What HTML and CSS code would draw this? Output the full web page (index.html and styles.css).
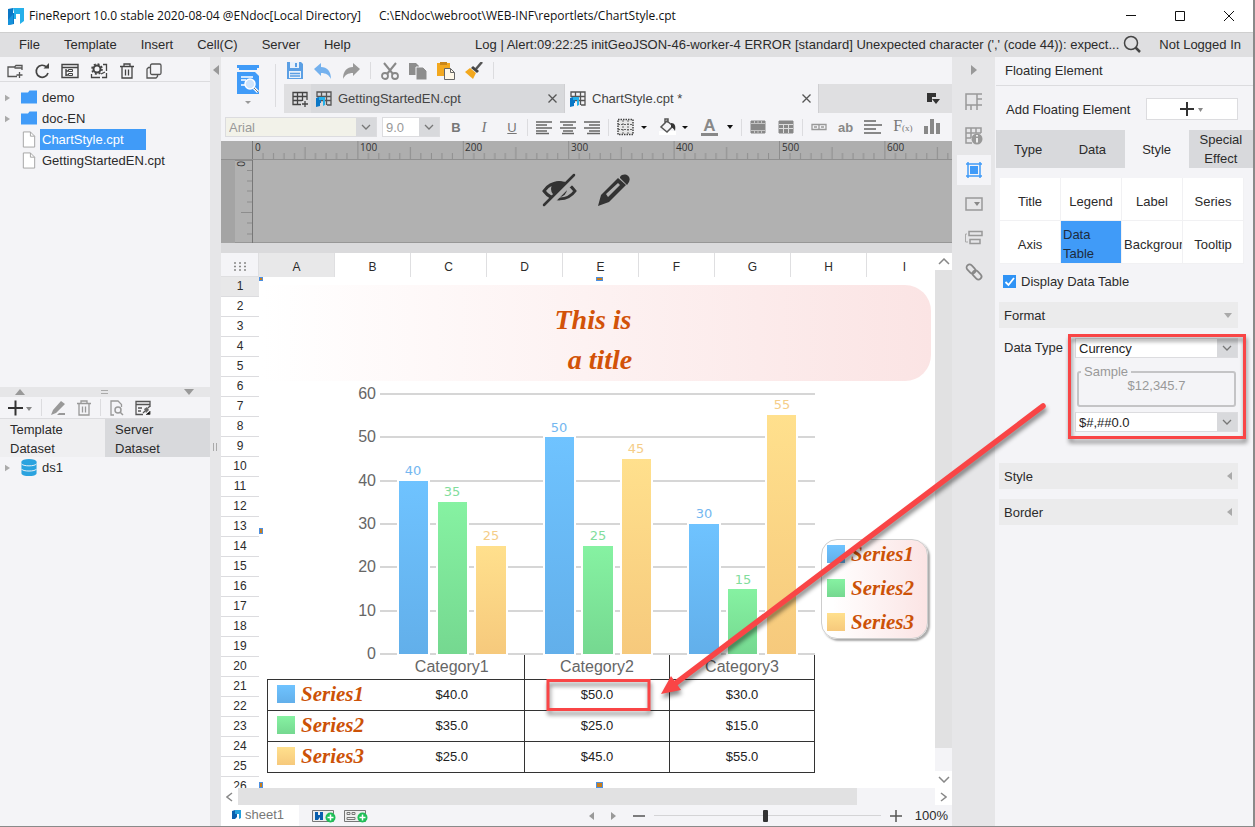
FILE: index.html
```html
<!DOCTYPE html>
<html lang="en">
<head>
<meta charset="utf-8">
<title>FineReport 10.0</title>
<link rel="stylesheet" href="styles.css">
</head>
<body>
<svg class="defs" aria-hidden="true">
  <defs>
    <linearGradient id="g-blue" x1="0" y1="0" x2="0" y2="1"><stop offset="0" stop-color="#6fc3ff"/><stop offset="1" stop-color="#62afea"/></linearGradient>
    <linearGradient id="g-green" x1="0" y1="0" x2="0" y2="1"><stop offset="0" stop-color="#86f2a2"/><stop offset="1" stop-color="#75d890"/></linearGradient>
    <linearGradient id="g-gold" x1="0" y1="0" x2="0" y2="1"><stop offset="0" stop-color="#ffe08d"/><stop offset="1" stop-color="#f6c97c"/></linearGradient>
    <symbol id="folder" viewBox="0 0 16 14"><path fill="#409bf8" d="M0 2h7l1.500-2H16v13H0z"/></symbol>
    <symbol id="file" viewBox="0 0 14 18"><path fill="#fff" stroke="#a3a3a3" d="M1 1h7.500L13 5.500V17H1z"/><path fill="none" stroke="#a3a3a3" d="M8.500 1v4.500H13"/></symbol>
    <symbol id="chev" viewBox="0 0 10 6"><path fill="none" stroke="#777" stroke-width="1.300" d="M1 1l4 4 4-4"/></symbol>
    <symbol id="caret" viewBox="0 0 6 4"><path fill="currentColor" d="M0 0h6L3 4z"/></symbol>
    <symbol id="trash" viewBox="0 0 16 16"><path fill="none" stroke="currentColor" stroke-width="1.300" d="M1 3.500h14M5 3V1h6v2M3 4v11h10V4M6.500 6.500v6M9.500 6.500v6"/></symbol>
    <symbol id="logo" viewBox="0 0 18 18"><path fill="#0a77c6" d="M1 2l5-1v5h3v6H7v5l-6 1z"/><path fill="#25b0ea" d="M6 1h11v13l-4 3V7H9v5H7V5z"/><path fill="#1592db" d="M1 13l5-6v10l-5 1z"/></symbol>
    <symbol id="tabgrid" viewBox="0 0 16 16"><path fill="none" stroke="#555" stroke-width="1.300" d="M1 6V1h14v13h-4M1 5.500h14M1 9.500h14M5.500 1v6M10.500 1v13"/><path fill="#0a77c6" d="M0 7l3-1v3h2v3H4v3l-4 1z"/><path fill="#25b0ea" d="M3 6h6v8l-2 1V9H3z"/></symbol>
    <symbol id="lines" viewBox="0 0 18 16"><path stroke="#888" stroke-width="2" d="M0 2h12M0 6h18M0 10h12M0 14h17"/></symbol>
  </defs>
</svg>

<div class="app">
  <header class="titlebar">
    <svg class="i18" aria-hidden="true"><use href="#logo"/></svg>
    <span class="app-name">FineReport 10.0 stable 2020-08-04 @ENdoc[Local Directory]</span>
    <span class="app-path">C:\ENdoc\webroot\WEB-INF\reportlets/ChartStyle.cpt</span>
    <div class="window-buttons">
      <button type="button" aria-label="Minimize"><svg width="12" height="12"><path stroke="#111" d="M1 5.500h10"/></svg></button>
      <button type="button" aria-label="Maximize"><svg width="12" height="12"><path fill="none" stroke="#111" d="M1.500 1.500h9v9h-9z"/></svg></button>
      <button type="button" aria-label="Close"><svg width="12" height="12"><path stroke="#111" d="M1 1l10 10M11 1L1 11"/></svg></button>
    </div>
  </header>

  <nav class="menubar">
    <button type="button">File</button><button type="button">Template</button><button type="button">Insert</button><button type="button">Cell(C)</button><button type="button">Server</button><button type="button">Help</button>
    <span class="log">Log | Alert:09:22:25 initGeoJSON-46-worker-4 ERROR [standard] Unexpected character (',' (code 44)): expect...</span>
    <button type="button" class="search" aria-label="Search"><svg width="18" height="18"><circle cx="8" cy="8" r="6.500" fill="none" stroke="#444" stroke-width="1.500"/><path stroke="#444" stroke-width="2.500" d="M12.500 12.500L17 17"/></svg></button>
    <button type="button" class="login">Not Logged In</button>
  </nav>

  <div class="main">
    <aside class="left">
      <section class="templates">
        <div class="toolbar file-tools">
          <button type="button" aria-label="New folder"><svg class="i16" viewBox="0 0 16 16"><path fill="none" stroke="#555" stroke-width="1.300" d="M15 7V2.500H9L7.500 4H1v9.500h9M7.500 5H15M12.500 9v6M9.500 12h6"/></svg></button>
          <button type="button" aria-label="Refresh"><svg class="i16" viewBox="0 0 16 16"><path fill="none" stroke="#444" stroke-width="1.700" d="M12.500 4A6 6 0 1 0 14 10"/><path fill="#444" d="M9.500 5.500H15V0z"/></svg></button>
          <button type="button" aria-label="Show structure"><svg class="i18" viewBox="0 0 18 16"><path fill="none" stroke="#444" stroke-width="1.400" d="M1 1.500h16v13H1zM1 4.500h16M5 6v7M5 8h2M5 12h2"/><path fill="none" stroke="#444" d="M7.500 6.500h4v2h-4zM7.500 10.500h4v2h-4z"/></svg></button>
          <button type="button" aria-label="Settings"><svg class="i18" viewBox="0 0 18 16"><circle cx="7" cy="6" r="3.500" fill="none" stroke="#444" stroke-width="2"/><circle cx="7" cy="6" r="5" fill="none" stroke="#444" stroke-width="1.600" stroke-dasharray="2 1.930"/><path fill="none" stroke="#444" stroke-width="1.300" d="M13 1.500h3.500V8M1.500 11v3.500H10M12 14.500h4.500V10M11 11l4-2"/></svg></button>
          <button type="button" aria-label="Delete"><svg class="i16 dark"><use href="#trash"/></svg></button>
          <button type="button" aria-label="Copy"><svg class="i16" viewBox="0 0 16 16"><rect x="4.500" y="1" width="10.500" height="10.500" rx="1.500" fill="none" stroke="#555" stroke-width="1.300"/><path fill="none" stroke="#555" stroke-width="1.300" d="M4.500 4.500H2.500L1 6v9h9l1.500-1.500v-2"/></svg></button>
        </div>
        <ul class="tree">
          <li><svg class="twist" viewBox="0 0 6 8"><path d="M0 0l6 4-6 4z"/></svg><svg class="node"><use href="#folder"/></svg><span>demo</span></li>
          <li><svg class="twist" viewBox="0 0 6 8"><path d="M0 0l6 4-6 4z"/></svg><svg class="node"><use href="#folder"/></svg><span>doc-EN</span></li>
          <li><i class="twist"></i><svg class="node"><use href="#file"/></svg><span class="picked">ChartStyle.cpt</span></li>
          <li><i class="twist"></i><svg class="node"><use href="#file"/></svg><span>GettingStartedEN.cpt</span></li>
        </ul>
      </section>
      <div class="splitter"><svg width="10" height="6"><path fill="#999" d="M0 6l5-6 5 6z"/></svg><svg width="7" height="4"><path stroke="#aaa" d="M0 .500h7M0 3.500h7"/></svg><svg width="10" height="6"><path fill="#999" d="M0 0l5 6 5-6z"/></svg></div>
      <section class="datasets">
        <div class="toolbar ds-tools">
          <button type="button" aria-label="Add dataset"><svg width="25" height="16"><path stroke="#333" stroke-width="2" d="M0 8h15M7.500 .500v15"/><path fill="#888" d="M18 7h6l-3 4z"/></svg></button>
          <i class="sep"></i>
          <button type="button" aria-label="Edit"><svg class="i16" viewBox="0 0 16 16"><path fill="#999" d="M1 15l2-5 8-9 4 3-9 9zM9 13h6v2H7z"/></svg></button>
          <button type="button" aria-label="Remove"><svg class="i16 grey"><use href="#trash"/></svg></button>
          <i class="sep"></i>
          <button type="button" aria-label="Preview data"><svg class="i16" viewBox="0 0 16 16"><path fill="none" stroke="#999" stroke-width="1.300" d="M5 15H2V1h7l3.500 3.500V7"/><circle cx="9" cy="10" r="3" fill="none" stroke="#999" stroke-width="1.500"/><path stroke="#999" stroke-width="1.500" d="M11 12l3 3"/></svg></button>
          <button type="button" aria-label="Connections"><svg class="i16" viewBox="0 0 16 16"><path fill="none" stroke="#555" stroke-width="1.300" d="M15 7V1.500H1v13h7M1 4.500h14M3 8h4M3 11h3M8 13l2-2M13 8l2-2"/><path fill="#666" d="M9 9l3-2 2 3-3 3z"/><path stroke="#555" d="M11 14.500h4V11"/></svg></button>
        </div>
        <div class="ds-tabs" role="tablist">
          <button type="button" role="tab" aria-selected="true">Template Dataset</button>
          <button type="button" role="tab" aria-selected="false">Server Dataset</button>
        </div>
        <ul class="tree ds-tree">
          <li><svg class="twist" viewBox="0 0 6 8"><path d="M0 0l6 4-6 4z"/></svg><svg class="node" viewBox="0 0 16 18"><path fill="#2ba3df" d="M0 3v12c0 4 16 4 16 0V3z"/><ellipse cx="8" cy="3" rx="8" ry="3" fill="#2ba3df"/><path fill="none" stroke="#f4f4f7" d="M0 5c1 3 15 3 16 0M0 10.500c1 3 15 3 16 0"/></svg><span>ds1</span></li>
        </ul>
      </section>
    </aside>
    <div class="gutter"><svg width="6" height="10"><path fill="#999" d="M6 0v10L0 5z"/></svg><svg width="5" height="8"><path stroke="#aaa" d="M.500 0v8M3.500 0v8"/></svg></div>

    <main class="center">
      <div class="head">
        <button type="button" class="preview" aria-label="Preview"><svg width="24" height="40" viewBox="0 0 24 40"><path fill="#409bf8" d="M1 1h22v3H21v2H3V4H1zM1 8h18l4 4v18H1z"/><path stroke="#fff" stroke-width="1.500" d="M5 13h12M5 16h5M5 21h4"/><circle cx="14" cy="20" r="5" fill="#cfe4fb" stroke="#fff" stroke-width="1.500"/><path stroke="#fff" stroke-width="3" d="M18 24l4 4"/><path stroke="#777" d="M18 24l4 4"/><path fill="#999" d="M9 37h6l-3 3z"/></svg></button>
        <div class="head-rows">
          <div class="toolbar edit-tools">
            <button type="button" aria-label="Save"><svg class="i18" viewBox="0 0 18 18"><path fill="#5b9fe4" d="M1 0h14l2 2v15H1z"/><path fill="#e8f1fb" d="M4 0h9v6H4zM3 9h12v7H3z"/><path fill="#5b9fe4" d="M9 1h2v4H9z"/><path stroke="#5b9fe4" stroke-width="1.500" d="M4 11.500h10M4 14h10"/></svg></button>
            <button type="button" aria-label="Undo"><svg class="i18" viewBox="0 0 18 18"><path fill="#74b1ee" d="M0 7l7-6v4c6 0 10 4 10 12-2-4-5-6-10-6v3z"/></svg></button>
            <button type="button" aria-label="Redo"><svg class="i18" viewBox="0 0 18 18"><path fill="#999" d="M18 7l-7-6v4C5 5 1 9 1 17c2-4 5-6 10-6v3z"/></svg></button>
            <i class="sep"></i>
            <button type="button" aria-label="Cut"><svg class="i18" viewBox="0 0 18 18"><path stroke="#888" stroke-width="2" d="M3 1l9 11M15 1L6 12"/><circle cx="4" cy="14" r="3" fill="none" stroke="#888" stroke-width="1.800"/><circle cx="14" cy="14" r="3" fill="none" stroke="#888" stroke-width="1.800"/></svg></button>
            <button type="button" aria-label="Copy"><svg class="i18" viewBox="0 0 18 18"><path fill="#8d8d8d" d="M0 1h7l3 3v9H0z"/><path fill="#8d8d8d" stroke="#f4f4f7" d="M7 5h7l4 4v9H7z"/></svg></button>
            <button type="button" aria-label="Paste"><svg class="i18" viewBox="0 0 18 18"><path fill="#f3a81e" d="M0 1h13v13H0z"/><path fill="#c9861a" d="M3 0h7v3H3z"/><path fill="#fff8e8" stroke="#666" d="M7.500 6.500h6l4 4v7h-10z"/><path fill="none" stroke="#666" d="M13.500 6.500v4h4"/></svg></button>
            <button type="button" aria-label="Format brush"><svg class="i18" viewBox="0 0 18 18"><path stroke="#555" stroke-width="2.500" d="M17 0l-6 7"/><path fill="#444" d="M8 4l6 5-2 2-6-5z"/><path fill="#f3a81e" d="M5 6l6 5-3 6-8-7z"/></svg></button>
            <i class="sep"></i>
          </div>
          <div class="doc-tabs" role="tablist">
            <button type="button" class="new-tab" aria-label="New template"><svg class="i16" viewBox="0 0 16 16"><path fill="none" stroke="#444" stroke-width="1.300" d="M15 9V1.500H1v12h8M1 5.500h14M1 9.500h9M5.500 1v12M10.500 1v9M13 10v6M10 13h6"/></svg></button>
            <div class="doc-tab" role="tab"><svg class="i16"><use href="#tabgrid"/></svg><span>GettingStartedEN.cpt</span><button type="button" aria-label="Close tab"><svg width="9" height="9"><path stroke="#555" stroke-width="1.300" d="M.500 .500l8 8M8.500 .500l-8 8"/></svg></button></div>
            <div class="doc-tab active" role="tab" aria-selected="true"><svg class="i16"><use href="#tabgrid"/></svg><span>ChartStyle.cpt *</span><button type="button" aria-label="Close tab"><svg width="9" height="9"><path stroke="#555" stroke-width="1.300" d="M.500 .500l8 8M8.500 .500l-8 8"/></svg></button></div>
            <button type="button" class="tab-list" aria-label="Tab list"><svg width="14" height="12"><path fill="#333" d="M0 0h9v4H5v5H0zM5 6h8l-4 5z"/></svg></button>
          </div>
        </div>
      </div>

      <div class="format-bar">
        <label class="combo font-family"><select aria-label="Font family"><option>Arial</option></select><svg width="10" height="6"><use href="#chev"/></svg></label>
        <label class="combo font-size"><select aria-label="Font size"><option>9.0</option></select><svg width="10" height="6"><use href="#chev"/></svg></label>
        <div class="fmt-group biu"><button type="button"><b>B</b></button><button type="button"><em>I</em></button><button type="button"><u>U</u></button></div>
        <i class="sep"></i>
        <div class="fmt-group aligns">
          <button type="button" aria-label="Align left"><svg class="i16" viewBox="0 0 16 16"><path stroke="#666" stroke-width="1.500" d="M0 3h16M0 6h11M0 9h16M0 12h11M0 14.500h13"/></svg></button>
          <button type="button" aria-label="Align center"><svg class="i16" viewBox="0 0 16 16"><path stroke="#666" stroke-width="1.500" d="M0 3h16M3 6h10M0 9h16M3 12h10M2 14.500h12"/></svg></button>
          <button type="button" aria-label="Align right"><svg class="i16" viewBox="0 0 16 16"><path stroke="#666" stroke-width="1.500" d="M0 3h16M5 6h11M0 9h16M5 12h11M3 14.500h13"/></svg></button>
        </div>
        <i class="sep"></i>
        <div class="fmt-group colors">
          <button type="button" aria-label="Borders"><svg width="30" height="18" viewBox="0 0 30 18"><path fill="#e8e8e8" stroke="#444" stroke-width="1.500" stroke-dasharray="1.500 1" d="M1 1.500h15v15H1z"/><path stroke="#666" stroke-dasharray="2 1" d="M6 2v14M11 2v14M1 6.500h15M1 11.500h15"/><path fill="#111" d="M24 8h6l-3 3z"/></svg></button>
          <button type="button" aria-label="Fill color"><svg width="30" height="18" viewBox="0 0 30 18"><path fill="#fff" d="M0 13h17v4H0z"/><path fill="none" stroke="#555" stroke-width="1.500" d="M7 4L2 9l6 5 6-6-6-5zM6 6V1h3v4"/><path fill="#333" d="M12 5c4 0 5 3 4 8-1-2-2-3-4-4z"/><path fill="#111" d="M23 8h6l-3 3z"/></svg></button>
          <button type="button" class="font-color" aria-label="Font color"><b>A</b><svg width="6" height="4"><use href="#caret"/></svg></button>
        </div>
        <i class="sep"></i>
        <div class="fmt-group merges">
          <button type="button" aria-label="Merge cells"><svg class="i16" viewBox="0 0 16 16"><path fill="#888" stroke="#888" d="M1 2h14v12H1z"/><path fill="none" stroke="#c4c4c4" d="M1 4.500h14M1 11.500h14M4.500 2v2M8 2v2M11.500 2v2M4.500 12v2M8 12v2M11.500 12v2"/></svg></button>
          <button type="button" aria-label="Split cells"><svg class="i16" viewBox="0 0 16 16"><path fill="#888" stroke="#888" d="M1 2h14v12H1z"/><path fill="none" stroke="#ddd" d="M1 5.500h14M1 9.500h14M5.500 5v9M10.500 5v9"/></svg></button>
        </div>
        <i class="sep"></i>
        <div class="fmt-group inserts">
          <button type="button" aria-label="Text field"><svg class="i16" viewBox="0 0 16 16"><path fill="none" stroke="#999" stroke-width="1.300" d="M1 5.500h14v5H1zM8 6v4M3 8h3M10 8h3"/></svg></button>
          <button type="button" class="ab">ab</button>
          <button type="button" aria-label="Rich text"><svg class="i18"><use href="#lines"/></svg></button>
          <button type="button" class="fx">F<small>(x)</small></button>
          <button type="button" aria-label="Insert chart"><svg class="i16" viewBox="0 0 16 16"><path fill="#888" d="M0 7h4v8H0zM6 0h4v15H6zM12 4h4v11h-4z"/></svg></button>
        </div>
      </div>

      <div class="ruler-pane">
        <svg class="ruler-top" width="100%" height="18">
          <defs><pattern id="ticks" x="31" width="105.400" height="18" patternUnits="userSpaceOnUse"><path stroke="#8d8d8d" d="M.500 0v18M11 12v6M21.500 12v6M32 12v6M42.500 12v6M53 6v12M63.500 12v6M74 12v6M84.500 12v6M95 12v6"/></pattern></defs>
          <rect x="31" width="100%" height="18" fill="url(#ticks)"/>
          <path stroke="#777" d="M31.500 0v18"/>
          <g class="ruler-text"><text x="34" y="10">0</text><text x="139" y="10">100</text><text x="244" y="10">200</text><text x="350" y="10">300</text><text x="455" y="10">400</text><text x="561" y="10">500</text><text x="666" y="10">600</text></g>
        </svg>
        <div class="ruler-row">
          <svg class="ruler-left" width="32" height="84"><path fill="#a4a4a4" d="M0 0h14v84H0z"/><path stroke="#8d8d8d" d="M26 10.500h5M26 21h5M26 31h5M26 42h5M20 52.500h11M26 63h5M26 74h5M14 .500h17"/><path stroke="#777" d="M31.500 0v84"/><text class="ruler-text" transform="translate(16 0) rotate(90)" x="1" y="0">0</text></svg>
          <div class="ruler-stage">
            <button type="button" aria-label="Hide element"><svg width="36" height="34" viewBox="0 0 36 34"><path fill="none" stroke="#333" stroke-width="3" d="M2 18C9 7 26 7 33 18 26 28 10 29 2 18z"/><circle cx="17" cy="16" r="8" fill="#333"/><path stroke="#b1b1b1" stroke-width="6" d="M6 32L34 4"/><path stroke="#333" stroke-width="2.500" stroke-linecap="round" d="M2 32L32 2"/></svg></button>
            <button type="button" aria-label="Edit element"><svg width="34" height="34" viewBox="0 0 34 34"><path fill="#333" fill-rule="evenodd" d="M1 33l3-11L21 5l8 7-17 17zM9 21l2 3L23 12l-2-2z"/><path fill="#333" d="M23 4c3-5 12-2 9 5l-2 3-7-7z"/></svg></button>
          </div>
        </div>
      </div>

      <div class="sheet">
        <div class="sheet-grid">
          <div class="col-heads">
            <span class="corner"><svg width="12" height="10"><path stroke="#888" stroke-width="1.500" stroke-dasharray="2 3" d="M0 1h12M0 4.500h12M0 8h12"/></svg></span>
            <span class="on">A</span><span>B</span><span>C</span><span>D</span><span>E</span><span>F</span><span>G</span><span>H</span><span>I</span>
          </div>
          <div class="sheet-body">
            <div class="row-heads">
              <span class="on">1</span><span>2</span><span>3</span><span>4</span><span>5</span><span>6</span><span>7</span><span>8</span><span>9</span><span>10</span><span>11</span><span>12</span><span>13</span><span>14</span><span>15</span><span>16</span><span>17</span><span>18</span><span>19</span><span>20</span><span>21</span><span>22</span><span>23</span><span>24</span><span>25</span><span>26</span>
            </div>
            <div class="cells">
              <div class="chart">
                <i class="handle nw"></i><i class="handle n"></i><i class="handle w"></i><i class="handle sw-corner"></i><i class="handle s"></i>
                <div class="chart-title">This is 
 a title</div>
                <div class="plot-row">
                  <svg class="plot" width="558" height="274" viewBox="0 0 558 274">
                    <path stroke="#d6d6d6" stroke-width="2" d="M122 13h435M122 56h435M122 100h435M122 143h435M122 186h435M122 230h435M122 273h435"/>
                    <g class="axis"><text x="118" y="18">60</text><text x="118" y="61">50</text><text x="118" y="105">40</text><text x="118" y="148">30</text><text x="118" y="191">20</text><text x="118" y="235">10</text><text x="118" y="278">0</text></g>
                    <g class="bars" fill="url(#g-blue)"><rect x="140" y="99" width="31" height="175"/><rect x="286" y="55" width="31" height="219"/><rect x="430" y="142" width="32" height="132"/></g>
                    <g class="bars" fill="url(#g-green)"><rect x="179" y="120" width="31" height="154"/><rect x="324" y="164" width="32" height="110"/><rect x="469" y="207" width="31" height="67"/></g>
                    <g class="bars" fill="url(#g-gold)"><rect x="217" y="164" width="32" height="110"/><rect x="363" y="77" width="31" height="197"/><rect x="508" y="33" width="31" height="241"/></g>
                    <g class="vals" fill="#74b7f0"><text x="155" y="94">40</text><text x="301" y="51">50</text><text x="446" y="137">30</text></g>
                    <g class="vals" fill="#82dd9c"><text x="194" y="115">35</text><text x="340" y="159">25</text><text x="485" y="203">15</text></g>
                    <g class="vals" fill="#f5cd88"><text x="233" y="159">25</text><text x="378" y="72">45</text><text x="524" y="28">55</text></g>
                  </svg>
                  <ul class="legend">
                    <li><i class="sw blue"></i>Series1</li><li><i class="sw green"></i>Series2</li><li><i class="sw gold"></i>Series3</li>
                  </ul>
                </div>
                <table class="data-table">
                  <thead><tr><td class="blank"></td><th class="first" scope="col">Category1</th><th scope="col">Category2</th><th scope="col">Category3</th></tr></thead>
                  <tbody>
                    <tr><th scope="row"><span><i class="sw blue"></i>Series1</span></th><td>$40.0</td><td>$50.0</td><td>$30.0</td></tr>
                    <tr><th scope="row"><span><i class="sw green"></i>Series2</span></th><td>$35.0</td><td>$25.0</td><td>$15.0</td></tr>
                    <tr><th scope="row"><span><i class="sw gold"></i>Series3</span></th><td>$25.0</td><td>$45.0</td><td>$55.0</td></tr>
                  </tbody>
                </table>
              </div>
            </div>
          </div>
        </div>
        <div class="vscroll">
          <button type="button" aria-label="Scroll up"><svg width="12" height="7"><path fill="none" stroke="#888" stroke-width="1.500" d="M1 6l5-5 5 5"/></svg></button>
          <i class="vthumb"></i><i class="vrest"></i>
          <button type="button" aria-label="Scroll down"><svg width="12" height="7"><path fill="none" stroke="#888" stroke-width="1.500" d="M1 1l5 5 5-5"/></svg></button>
        </div>
      </div>
      <div class="hscroll">
        <button type="button" aria-label="Scroll left"><svg width="7" height="10"><path fill="none" stroke="#888" stroke-width="1.500" d="M6 1L1 5l5 4"/></svg></button>
        <i class="hthumb"></i><i class="hrest"></i>
        <button type="button" aria-label="Scroll right"><svg width="7" height="10"><path fill="none" stroke="#888" stroke-width="1.500" d="M1 1l5 4-5 4"/></svg></button>
      </div>
      <footer class="footer">
        <button type="button" class="sheet-tab"><svg width="9" height="9" viewBox="0 0 9 9"><path fill="#0a5fae" d="M0 1l3-1v4h2v3L3 9H0z"/><path fill="#25a0dc" d="M3 0h6v8L7 9V4H3z"/></svg>sheet1</button>
        <button type="button" aria-label="Add sheet"><svg width="24" height="14"><path fill="#eee" stroke="#777" d="M.500 1.500h21v11H.500z"/><path fill="#0a5fae" d="M3 3h3v3h2V3h3v8H8V8L6 11H3z"/><circle cx="18.500" cy="8.500" r="5" fill="#1fbf57"/><path stroke="#fff" stroke-width="1.500" d="M15.500 8.500h6M18.500 5.500v6"/></svg></button>
        <button type="button" aria-label="Add form sheet"><svg width="24" height="14"><path fill="#eee" stroke="#777" d="M.500 1.500h21v11H.500z"/><path fill="none" stroke="#777" d="M3 3.500h3v2H3zM8 3.500h3v2H8zM3 8.500h8v2H3z"/><circle cx="18.500" cy="8.500" r="5" fill="#1fbf57"/><path stroke="#fff" stroke-width="1.500" d="M15.500 8.500h6M18.500 5.500v6"/></svg></button>
        <div class="zoom">
          <button type="button" aria-label="Previous sheet"><svg width="5" height="8"><path fill="#999" d="M5 0v8L0 4z"/></svg></button>
          <button type="button" class="next" aria-label="Next sheet"><svg width="5" height="8"><path fill="#999" d="M0 0v8l5-4z"/></svg></button>
          <button type="button" aria-label="Zoom out"><svg width="12" height="12"><path stroke="#555" stroke-width="1.500" d="M0 6h12"/></svg></button>
          <input type="range" min="0" max="200" value="98" aria-label="Zoom">
          <button type="button" aria-label="Zoom in"><svg width="12" height="12"><path stroke="#555" stroke-width="1.500" d="M0 6h12M6 0v12"/></svg></button>
          <span>100%</span>
        </div>
      </footer>
    </main>

    <div class="rail">
      <button type="button" aria-label="Collapse"><svg width="6" height="10"><path fill="#999" d="M0 0v10l6-5z"/></svg></button>
      <button type="button" aria-label="Cell element"><svg class="i18" viewBox="0 0 18 18"><path fill="none" stroke="#999" stroke-width="1.500" d="M1 17V1h16M1 12h11V1M12 6h5M12 12h5M6 12v5M12 12v5"/></svg></button>
      <button type="button" aria-label="Cell attributes"><svg class="i18" viewBox="0 0 18 18"><path fill="none" stroke="#999" stroke-width="1.500" d="M7 16H1V1h15v5M1 6h15M1 11h5M6 1v10M11 1v5"/><circle cx="12" cy="12" r="5.500" fill="#999"/><path stroke="#eee" stroke-width="2" d="M12 8v1.500M12 11v4.500"/></svg></button>
      <button type="button" class="on" aria-label="Floating element"><svg class="i18" viewBox="0 0 18 18"><path fill="none" stroke="#409bf8" stroke-width="1.500" d="M3 1v16M15 1v16M1 3h16M1 15h16"/><path fill="#409bf8" d="M5 5h8v8H5z"/></svg></button>
      <button type="button" aria-label="Widget"><svg class="i18" viewBox="0 0 18 18"><path fill="none" stroke="#999" stroke-width="1.500" d="M1 3h16v12H1z"/><path fill="#888" d="M9 7h6l-3 4z"/></svg></button>
      <button type="button" aria-label="Condition"><svg class="i18" viewBox="0 0 18 18"><path fill="none" stroke="#999" stroke-width="1.500" d="M4 2.500h13v4H4zM5 10.500h10v4H5z"/><path fill="none" stroke="#aaa" d="M2 5H.500v8H3"/></svg></button>
      <button type="button" aria-label="Hyperlink"><svg class="i18" viewBox="0 0 18 18"><g fill="none" stroke="#888" stroke-width="1.800"><rect x="1" y="3" width="10" height="6" rx="3" transform="rotate(45 6 6)"/><rect x="7" y="9" width="10" height="6" rx="3" transform="rotate(45 12 12)"/></g></svg></button>
    </div>

    <aside class="props">
      <h2>Floating Element</h2>
      <div class="add-row"><span>Add Floating Element</span><button type="button" aria-label="Add floating element"><svg width="24" height="14"><path stroke="#333" stroke-width="2" d="M0 7h14M7 0v14"/><path fill="#888" d="M18 6h5l-2.500 4z"/></svg></button></div>
      <div class="prop-tabs" role="tablist">
        <button type="button" role="tab">Type</button><button type="button" role="tab">Data</button><button type="button" role="tab" aria-selected="true">Style</button><button type="button" role="tab">Special Effect</button>
      </div>
      <div class="style-grid">
        <button type="button">Title</button><button type="button">Legend</button><button type="button">Label</button><button type="button">Series</button>
        <button type="button">Axis</button><button type="button" class="on">Data Table</button><button type="button" class="clip">Background</button><button type="button">Tooltip</button>
      </div>
      <label class="check"><input type="checkbox" checked><svg width="13" height="13"><path fill="none" stroke="#fff" stroke-width="1.800" d="M2.500 7l3 3L11 3"/></svg>Display Data Table</label>
      <button type="button" class="fold">Format<svg width="8" height="5"><path fill="#aaa" d="M0 0h8L4 5z"/></svg></button>
      <div class="format-form">
        <label for="dtype">Data Type</label>
        <div class="fields">
          <div class="combo"><select id="dtype"><option>Currency</option></select><svg width="10" height="6"><use href="#chev"/></svg></div>
          <fieldset><legend>Sample</legend><span>$12,345.7</span></fieldset>
          <div class="combo"><select aria-label="Number pattern"><option>$#,##0.0</option></select><svg width="10" height="6"><use href="#chev"/></svg></div>
        </div>
      </div>
      <button type="button" class="fold">Style<svg width="5" height="8"><path fill="#aaa" d="M5 0v8L0 4z"/></svg></button>
      <button type="button" class="fold">Border<svg width="5" height="8"><path fill="#aaa" d="M5 0v8L0 4z"/></svg></button>
    </aside>
  </div>

  <svg class="callouts" width="1255" height="827" aria-hidden="true">
    <g fill="none" stroke="#f94546" stroke-width="3"><path d="M548 680.500h101v29H548z"/><path d="M1069.500 335.500h175v102h-175z"/></g>
    <path stroke="#f94546" stroke-width="5.500" stroke-linecap="round" d="M1043 406L676 683"/>
    <path fill="#f94546" d="M661 694l10-18 10 14z"/>
  </svg>
</div>
</body>
</html>
```
FILE: styles.css
```css
* { box-sizing: border-box; }
body { margin: 0; font: 13px/19px "Liberation Sans", Arial, sans-serif; color: #2b2b2b; }
button { font: inherit; color: inherit; background: none; border: 0; padding: 0; margin: 0; }
button svg { display: block; }
ul { list-style: none; margin: 0; padding: 0; }
.defs { position: absolute; width: 0; height: 0; }
.i16 { width: 16px; height: 16px; flex: none; }
.i18 { width: 18px; height: 18px; flex: none; }
.dark { color: #444; }
.grey { color: #999; }

.app { position: relative; display: flex; flex-direction: column; height: 100vh; min-height: 827px; background: #f4f4f7; border-right: 2px solid #8a8a8a; border-bottom: 1px solid #8a8a8a; overflow: hidden; }

.titlebar { display: flex; align-items: center; height: 33px; flex: none; padding-left: 7px; background: #fff; border-bottom: 1px solid #cfcfcf; font: 12px/16px "Open Sans", "Noto Sans", sans-serif; color: #111; }
.app-name { margin-left: 4px; }
.app-path { margin-left: 18px; }
.window-buttons { display: flex; margin-left: auto; gap: 37px; padding-right: 18px; }

.menubar { display: flex; align-items: center; height: 24px; flex: none; background: #dfdfe1; padding: 0 12px 2px 19px; gap: 24px; white-space: nowrap; }
.log { margin-left: auto; }
.search { margin-left: -20px; }
.login { margin-left: -6px; }

.main { flex: 1; display: flex; min-height: 0; }

.left { width: 210px; flex: none; display: flex; flex-direction: column; }
.templates { flex: 10 10 0; }
.datasets { flex: 13 13 0; }
.toolbar { display: flex; align-items: center; }
.sep { width: 1px; height: 17px; background: #dcdcdf; flex: none; }
.file-tools { height: 25px; padding: 4px 0 0 7px; gap: 11px; border-bottom: 1px solid #dcdcdf; }
.tree { padding-top: 5px; }
.tree li { display: flex; align-items: center; height: 21px; }
.twist { width: 5px; height: 8px; margin: 0 11px 0 5px; fill: #aaa; }
.node { width: 16px; height: 17px; margin-right: 3px; }
.tree span { padding: 1px 2px; line-height: 19px; }
.tree .picked { width: 106px; background: #409bf8; color: #fff; }
.splitter { height: 10px; display: flex; align-items: center; justify-content: space-between; background: #e6e6e8; padding: 0 16px 0 15px; }
.ds-tools { height: 22px; padding-left: 8px; gap: 10px; border-bottom: 1px solid #dcdcdf; }
.ds-tools .sep { margin: 0 -2px; }
.ds-tabs { display: grid; grid-template-columns: 1fr 1fr; }
.ds-tabs button { text-align: left; padding: 1px 34px 0 10px; height: 38px; background: #d8d9dc; }
.ds-tabs [aria-selected="true"] { background: #efeff1; }
.ds-tree { padding-top: 0; }

.gutter { width: 11px; flex: none; background: #e6e6e8; display: flex; flex-direction: column; align-items: center; padding-top: 8px; gap: 368px; }

.center { flex: 1; min-width: 0; display: flex; flex-direction: column; }
.head { display: flex; height: 56px; flex: none; }
.preview { width: 55px; margin: 7px 8px 6px 0; border-right: 1px solid #dcdcdf; display: flex; justify-content: center; }
.head-rows { flex: 1; }
.edit-tools { height: 27px; padding-left: 2px; gap: 10px; }
.doc-tabs { display: flex; height: 29px; background: #dfdfe1; color: #444; }
.new-tab { width: 27px; display: flex; align-items: center; justify-content: center; padding-left: 5px; }
.doc-tab { width: 254px; display: flex; align-items: center; padding: 0 7px 0 5px; gap: 6px; background: #d8d9dc; border-right: 1px solid #cfcfd2; }
.doc-tab button { margin-left: auto; }
.doc-tab.active { background: #f4f4f7; }
.tab-list { margin: 0 11px 0 auto; }

.format-bar { display: flex; align-items: center; height: 28px; flex: none; padding-left: 4px; color: #777; }
.combo { display: grid; grid-template-columns: 1fr 20px; align-items: center; justify-items: center; height: 20px; border: 1px solid #dcdcdf; background: linear-gradient(to left, #d8d9dc 20px, transparent 20px) #fff; }
.combo select { grid-area: 1 / 1 / 2 / 3; width: 100%; height: 18px; appearance: none; border: 0; padding: 0 3px; background: none; font: inherit; color: inherit; }
.combo svg { grid-area: 1 / 2; pointer-events: none; }
.font-family { width: 152px; background-color: #f2f2e9; color: #999; }
.font-size { width: 58px; margin-left: 5px; color: #999; }
.fmt-group { display: flex; align-items: center; }
.format-bar .sep { margin: 0 8px; }
.biu { gap: 14px; margin-left: 9px; }
.biu button { width: 14px; text-align: center; }
.biu em { font-family: "Liberation Serif", serif; font-size: 15px; }
.aligns { gap: 8px; }
.colors { gap: 12px; }
.font-color { display: flex; align-items: center; gap: 9px; color: #111; }
.font-color b { width: 17px; border-bottom: 3px solid #888; color: #888; font-size: 17px; line-height: 15px; text-align: center; }
.merges { gap: 12px; }
.inserts { gap: 11px; }
.inserts .ab { font-weight: bold; color: #888; }
.fx { font: 16px/18px "Liberation Serif", serif; color: #777; }
.fx small { font-size: 9px; }

.ruler-pane { height: 102px; flex: none; background: #b1b1b1; border-bottom: 1px solid #979797; }
.ruler-top { display: block; background: #aeaeae; }
.ruler-text { font: 10px "Open Sans", sans-serif; fill: #333; }
.ruler-row { display: flex; height: 83px; border-top: 1px solid #909090; }
.ruler-left { flex: none; }
.ruler-stage { flex: 1; display: flex; justify-content: center; align-items: flex-start; gap: 19px; padding: 13px 33px 0 0; }

.sheet { flex: 1; min-height: 0; display: flex; background: #fff; border-top: 10px solid #dadadc; }
.sheet-grid { flex: 1; min-width: 0; display: flex; flex-direction: column; }
.col-heads { display: flex; height: 24px; flex: none; overflow: hidden; font-size: 12px; }
.col-heads span { width: 76px; flex: none; display: flex; align-items: center; justify-content: center; padding-top: 4px; border-right: 1px solid #dfdfe1; }
.col-heads .corner { width: 38px; background: #f4f4f7; border-bottom: 1px solid #dfdfe1; }
.col-heads .on, .row-heads .on { background: #e8e8e9; }
.sheet-body { flex: 1; display: flex; min-height: 0; overflow: hidden; }
.row-heads { width: 38px; flex: none; font-size: 12px; }
.row-heads span { display: block; height: 20px; line-height: 18px; text-align: center; border-bottom: 1px solid #dcdcdf; }
.cells { flex: 1; position: relative; }

/* The chart floats freely over the cell grid. */
.chart { position: absolute; left: 0; top: 0; width: 676px; height: 511px; padding-top: 8px; }
.handle { position: absolute; width: 7px; height: 4px; background: #c87d1c; border: 1px solid #4c8fe0; }
.handle.nw, .handle.w, .handle.sw-corner { left: 0; width: 4px; }
.handle.n, .handle.s { left: 337px; }
.handle.nw, .handle.n { top: 0; }
.handle.w { top: 251px; height: 6px; }
.handle.sw-corner, .handle.s { bottom: 0; height: 6px; }
.chart-title { height: 96px; margin: 0 4px 0 3px; padding: 15px 0 0; white-space: pre; text-align: center; font: italic bold 28px/40px "Liberation Serif", serif; color: #d25208; border-radius: 0 26px 26px 0; background: linear-gradient(to right, #fff, #fbe4e4); }
.plot-row { display: flex; height: 274px; }
.plot { overflow: visible; margin-left: -1px; flex: none; }
.axis { font-size: 16px; fill: #666; text-anchor: end; }
.bars { stroke: #fff; stroke-width: 2px; }
.vals { font: 13px "DejaVu Sans", sans-serif; text-anchor: middle; }
.legend { display: flex; flex-direction: column; gap: 6px; width: 107px; height: 100px; align-self: flex-end; margin: 0 0 16px 5px; padding: 0 5px; border: 1px solid #cdcdcd; border-radius: 16px; background: linear-gradient(to right, #fff 10%, #fbe4e4); box-shadow: 2px 2px 2px #aaa; }
.legend li { height: 28px; }
.legend li, .data-table tbody th span { display: flex; align-items: center; gap: 6px; font: italic bold 21px/28px "Liberation Serif", serif; color: #cc5207; }
.sw { width: 18px; height: 18px; flex: none; }
.sw.blue { background: linear-gradient(#6fc3ff, #62afea); }
.sw.green { background: linear-gradient(#86f2a2, #75d890); }
.sw.gold { background: linear-gradient(#ffe08d, #f6c97c); }
.data-table { width: 548px; margin-left: 8px; border-collapse: collapse; table-layout: fixed; text-align: center; color: #222; }
.data-table td, .data-table th { padding: 0 0 1px; border: 1px solid #333; }
.data-table thead tr { height: 24px; }
.data-table thead th { width: 145px; border-top: 0; font-weight: normal; font-size: 16px; color: #666; }
.data-table .blank { border-width: 0 0 1px; }
.data-table thead .first { border-left: 0; }
.data-table tbody tr { height: 31px; }
.data-table tbody th { border-right: 0; padding: 0 0 2px 9px; }
.data-table tbody th + td { border-left: 0; }

.vscroll { width: 17px; flex: none; display: flex; flex-direction: column; background: #f4f4f7; }
.vscroll button { height: 17px; background: #fff; display: flex; align-items: center; justify-content: center; }
.vthumb { flex: 478; background: #e1e1e2; }
.vrest { flex: 23; }
.hscroll { height: 17px; flex: none; display: flex; }
.hscroll button { width: 17px; background: #fff; display: flex; align-items: center; justify-content: center; }
.hthumb { flex: 619; background: #e1e1e2; }
.hrest { flex: 78; }
.footer { height: 21px; flex: none; display: flex; align-items: center; }
.sheet-tab { display: flex; align-items: center; gap: 4px; width: 78px; height: 21px; padding: 0 0 3px 11px; margin-right: 13px; background: #fff; color: #777; }
.footer > button + button { margin-right: 8px; }
.zoom { margin-left: auto; display: flex; align-items: center; padding-right: 4px; gap: 13px; }
.zoom .next { margin: 0 4px; }
.zoom input { appearance: none; width: 227px; height: 13px; margin: 0 -4px; background: linear-gradient(#d4d4d6, #d4d4d6) center / 100% 1px no-repeat; }
.zoom input::-webkit-slider-thumb { appearance: none; width: 5px; height: 12px; border-radius: 1px; background: #333; }

.rail { width: 43px; flex: none; background: #e6e6e8; display: flex; flex-direction: column; align-items: center; }
.rail button { width: 34px; height: 30px; margin-bottom: 4px; display: flex; align-items: center; justify-content: center; }
.rail button:first-child { height: 26px; }
.rail .on { background: #f4f4f7; }

.props { width: 258px; flex: none; padding-left: 1px; }
.props h2 { margin: 0; height: 29px; padding: 4px 9px; font: inherit; border-bottom: 1px solid #dcdcdf; }
.add-row { display: flex; align-items: center; justify-content: space-between; height: 44px; padding: 2px 15px 0 10px; }
.add-row button { width: 92px; height: 22px; border: 1px solid #dcdcdf; background: #fff; display: flex; align-items: center; justify-content: center; }
.prop-tabs { display: grid; grid-template-columns: repeat(4, 1fr); height: 38px; }
.prop-tabs button { background: #d8d9dc; padding: 0 8px; }
.prop-tabs [aria-selected="true"] { background: #f4f4f7; }
.style-grid { display: grid; grid-template-columns: repeat(4, 1fr); grid-auto-rows: 43px; margin: 10px 9px 8px 4px; background: #fff; }
.style-grid button { border: 1px solid #f1f1f3; border-width: 0 1px 1px 0; padding: 4px 2px 0; overflow: hidden; text-align: center; }
.style-grid .on { background: #409bf8; text-align: left; padding-right: 20px; color: #1d2c3d; }
.style-grid .clip { text-align: left; }
.check { position: relative; display: flex; align-items: center; gap: 5px; margin-left: 7px; height: 19px; }
.check input { appearance: none; margin: 0; width: 13px; height: 13px; background: #2f93f5; }
.check svg { position: absolute; left: 0; top: 3px; }
.fold { display: flex; align-items: center; justify-content: space-between; width: 239px; height: 26px; margin: 0 0 10px 3px; padding: 0 6px 0 5px; background: #ebebec; }
.check + .fold { margin-top: 11px; }
.format-form { display: flex; padding: 0 15px 0 8px; height: 125px; }
.format-form label { width: 71px; }
.fields { flex: 1; display: flex; flex-direction: column; }
.fields select { color: #222; }
fieldset { margin: 6px 2px 5px; padding: 0 0 3px; height: 43px; border: 2px solid #c4c4c6; border-radius: 3px; text-align: center; color: #999; min-width: 0; }
legend { padding: 0 3px; margin-left: 2px; line-height: 16px; text-align: left; }
fieldset span { display: block; line-height: 12px; }

.callouts { position: absolute; left: 0; top: 0; pointer-events: none; filter: drop-shadow(1px 4px 2px rgba(0, 0, 0, .45)); }
```
